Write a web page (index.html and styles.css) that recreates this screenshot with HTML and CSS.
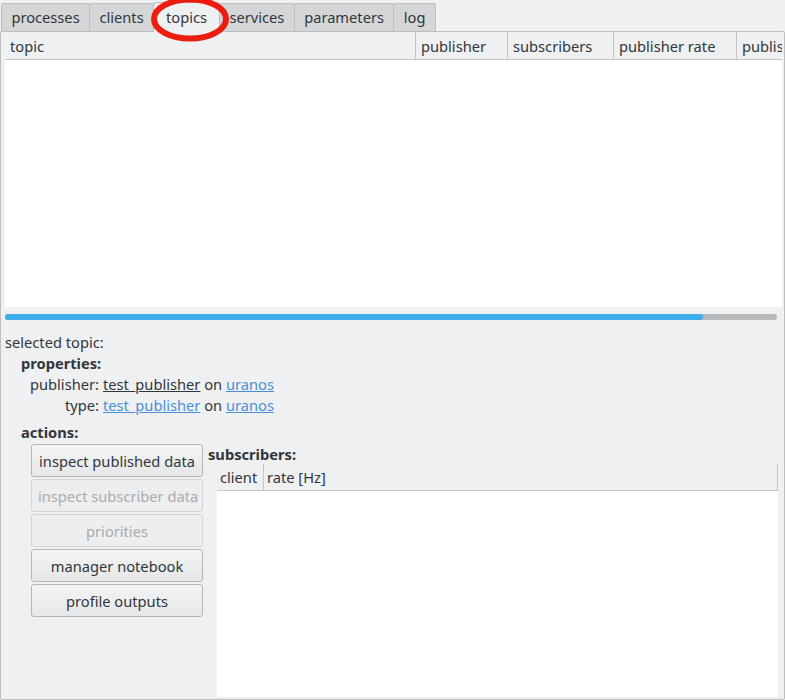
FILE: index.html
```html
<!DOCTYPE html>
<html lang="en">
<head>
    <meta charset="UTF-8">
    <title>topics</title>
    <link rel="stylesheet" href="styles.css">
</head>
<body>
    <div class="tabbar">
        <div class="tab">processes</div>
        <div class="tab">clients</div>
        <div class="tab selected">topics</div>
        <div class="tab">services</div>
        <div class="tab">parameters</div>
        <div class="tab">log</div>
    </div>
    <svg class="marker" width="86" height="50" viewBox="0 0 86 50">
        <ellipse cx="43" cy="24" rx="36" ry="19.5" fill="none" stroke="#ec1c0e" stroke-width="6"/>
    </svg>

    <div class="pane">
        <div class="table topics-table">
            <div class="thead">
                <div class="th col-topic">topic</div>
                <div class="th col-pub">publisher</div>
                <div class="th col-subs">subscribers</div>
                <div class="th col-rate">publisher rate</div>
                <div class="th col-last">publishers</div>
            </div>
            <div class="tbody"></div>
        </div>
        <div class="hscroll"><div class="hscroll-handle"></div></div>

        <div class="details">
            <div class="line">selected topic:</div>
            <div class="line heading">properties:</div>
            <div class="props">
                <span class="label">publisher:</span>
                <span><a class="link plain">test_publisher</a> on <a class="link">uranos</a></span>
                <span class="label">type:</span>
                <span><a class="link">test_publisher</a> on <a class="link">uranos</a></span>
            </div>
            <div class="line heading actions-title">actions:</div>
        </div>

        <div class="lower">
            <div class="buttons">
                <button class="btn">inspect published data</button>
                <button class="btn" disabled>inspect subscriber data</button>
                <button class="btn" disabled>priorities</button>
                <button class="btn">manager notebook</button>
                <button class="btn">profile outputs</button>
            </div>
            <div class="subscribers">
                <div class="heading subs-title">subscribers:</div>
                <div class="table subs-table">
                    <div class="thead">
                        <div class="th col-client">client</div>
                        <div class="th col-hz">rate [Hz]</div>
                    </div>
                    <div class="tbody"></div>
                </div>
            </div>
        </div>
    </div>
</body>
</html>
```

FILE: styles.css
```css
body {
    margin: 0;
    background-color: #eff0f1;
    color: #31363b;
    font-family: 'Noto Sans', 'DejaVu Sans', sans-serif;
    font-size: 11pt;
    height: 700px;
    overflow: hidden;
}

/* tabs */
.tabbar {
    display: flex;
    align-items: flex-end;
    height: 31px;
    padding-left: 1px;
}
.tab {
    height: 28px;
    line-height: 27px;
    padding: 0 9.4px;
    background-color: #d4d6d8;
    border: 1px solid #bcbebf;
    border-bottom: none;
    border-radius: 3px 3px 0 0;
    margin-right: -1px;
    box-sizing: border-box;
    white-space: nowrap;
}
.tab.selected {
    position: relative;
    z-index: 1;
    height: 30px;
    line-height: 28px;
    margin-bottom: -1px;
    padding: 0 12px;
    background-color: #eff0f1;
}
.marker {
    position: absolute;
    left: 147px;
    top: -5px;
    z-index: 2;
}

/* pane */
.pane {
    height: 669px;
    box-sizing: border-box;
    border: 1px solid #bcbebf;
    border-radius: 2px;
    padding: 0 2px 2px 4px;
    display: flex;
    flex-direction: column;
}

/* tables */
.table {
    display: flex;
    flex-direction: column;
}
.thead {
    display: flex;
    height: 28px;
    border-bottom: 1px solid #c3c5c7;
    box-sizing: border-box;
    overflow: hidden;
}
.th {
    flex: none;
    line-height: 28px;
    padding-left: 5px;
    border-right: 1px solid #c3c5c7;
    box-sizing: border-box;
    white-space: nowrap;
    overflow: hidden;
}
.tbody {
    flex: 1;
    background-color: #fff;
}
.topics-table {
    height: 275px;
}
.col-topic { width: 411px; }
.col-pub { width: 92px; }
.col-subs { width: 106px; }
.col-rate { width: 123px; }
.col-last { width: 45px; border-right: none; }

.hscroll {
    margin: 7px 5px 0 0;
    height: 6px;
    border-radius: 3px;
    background-color: #b6b8b9;
}
.hscroll-handle {
    width: 90.4%;
    height: 100%;
    border-radius: 3px;
    background-color: #3daee9;
}

/* details */
.details {
    margin-top: 12px;
    line-height: 21px;
}
.heading {
    font-weight: bold;
}
.details .heading {
    margin-left: 16px;
}
.props {
    display: grid;
    grid-template-columns: auto auto;
    justify-content: start;
    column-gap: 4px;
    margin-left: 25px;
}
.props .label {
    justify-self: end;
}
.link {
    color: #4a90d9;
    text-decoration: underline;
}
.link.plain {
    color: #31363b;
}
.actions-title {
    margin-top: 6px;
    margin-bottom: 1px;
}

/* lower part */
.lower {
    flex: 1;
    display: flex;
    gap: 5px;
    margin-left: 26px;
    min-height: 0;
}
.buttons {
    width: 172px;
    display: flex;
    flex-direction: column;
    gap: 2px;
}
.btn {
    height: 33px;
    font-family: inherit;
    font-size: 11pt;
    color: #31363b;
    background: linear-gradient(#f4f4f5, #e6e7e8);
    border: 1px solid #b4b6b8;
    border-radius: 3px;
    padding: 0 6px;
    white-space: nowrap;
}
.btn:disabled {
    color: #a9abad;
    background: #eceeef;
    border-color: #d0d2d4;
}
.subscribers {
    flex: 1;
    display: flex;
    flex-direction: column;
    margin-right: 4px;
}
.subs-title {
    line-height: 20px;
}
.subs-table {
    flex: 1;
    margin-left: 9px;
}
.subs-table .thead {
    height: 27px;
}
.subs-table .th {
    line-height: 26px;
    padding-left: 3px;
}
.col-client { width: 47px; }
.col-hz { flex: 1 !important; }
```
